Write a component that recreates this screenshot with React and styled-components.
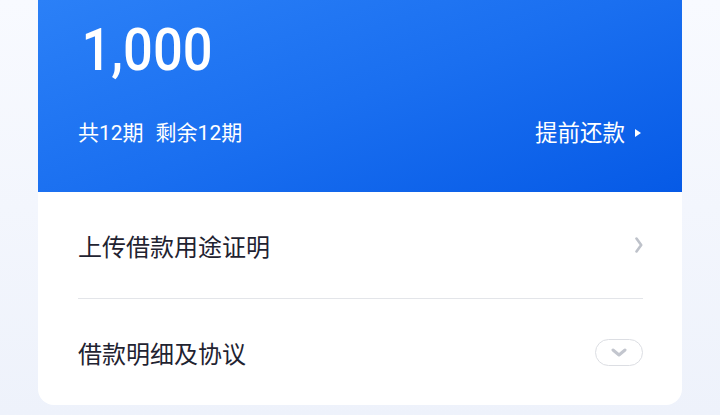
import React from "react";
import styled, { createGlobalStyle } from "styled-components";

const GlobalStyle = createGlobalStyle`
  html, body {
    margin: 0;
    padding: 0;
  }
  body {
    background: linear-gradient(180deg, #f8faff 0%, #eef2fb 100%);
    min-height: 415px;
    font-family: "Roboto", "Noto Sans CJK SC", sans-serif;
  }
`;

const Page = styled.div`
  padding: 0 38px 10px;
`;

const Card = styled.div`
  background: #fff;
  border-radius: 0 0 16px 16px;
  overflow: hidden;
`;

const Header = styled.div`
  height: 192px;
  box-sizing: border-box;
  padding: 10px 41px 0 40px;
  background: linear-gradient(160deg, #2b80f7 0%, #1a6ff0 50%, #065ae6 100%);
  color: #fff;
  display: flex;
  flex-direction: column;
`;

const Amount = styled.div`
  align-self: flex-start;
  font-family: "Roboto", sans-serif;
  font-size: 60px;
  font-weight: 500;
  line-height: 80px;
  padding-left: 4px;
  transform: scaleX(0.875);
  transform-origin: left center;
`;

const Meta = styled.div`
  margin-top: 28px;
  display: flex;
  align-items: center;
  justify-content: space-between;
  height: 30px;
`;

const Terms = styled.div`
  display: flex;
  gap: 12px;
  font-size: 21px;
  line-height: 30px;
`;

const Prepay = styled.div`
  display: flex;
  align-items: center;
  gap: 10px;
  font-size: 22.5px;
  line-height: 30px;
`;

const Row = styled.div`
  height: 106px;
  padding: 0 39px 0 40px;
  display: flex;
  align-items: center;
  justify-content: space-between;
  font-family: "Noto Sans CJK SC", sans-serif;
  font-size: 24px;
  color: #1f2331;
`;

const Divider = styled.div`
  height: 1px;
  margin: 0 39px 0 40px;
  background: #e3e5e9;
`;

const Pill = styled.div`
  width: 46px;
  height: 25px;
  border: 1px solid #dcdee3;
  border-radius: 14px;
  display: flex;
  align-items: center;
  justify-content: center;
`;

const Caret = () => (
  <svg width="6" height="8" viewBox="0 0 6 8">
    <path d="M0 0 L6 4 L0 8 Z" fill="#fff" />
  </svg>
);

const ChevronRight = () => (
  <svg width="8" height="16" viewBox="0 0 8 16">
    <path d="M1.5 1.5 L6.2 8 L1.5 14.5" fill="none" stroke="#bec2ca" strokeWidth="2.6" strokeLinecap="round" strokeLinejoin="round" />
  </svg>
);

const ChevronDown = () => (
  <svg width="16" height="9" viewBox="0 0 16 9">
    <path d="M2 2 L8 7 L14 2" fill="none" stroke="#c3c6ce" strokeWidth="3" strokeLinecap="round" strokeLinejoin="round" />
  </svg>
);

export default function App() {
  return (
    <>
      <GlobalStyle />
      <Page>
        <Card>
          <Header>
            <Amount>1,000</Amount>
            <Meta>
              <Terms>
                <span>共12期</span>
                <span>剩余12期</span>
              </Terms>
              <Prepay>
                <span>提前还款</span>
                <Caret />
              </Prepay>
            </Meta>
          </Header>
          <Row>
            <span>上传借款用途证明</span>
            <ChevronRight />
          </Row>
          <Divider />
          <Row>
            <span>借款明细及协议</span>
            <Pill>
              <ChevronDown />
            </Pill>
          </Row>
        </Card>
      </Page>
    </>
  );
}
